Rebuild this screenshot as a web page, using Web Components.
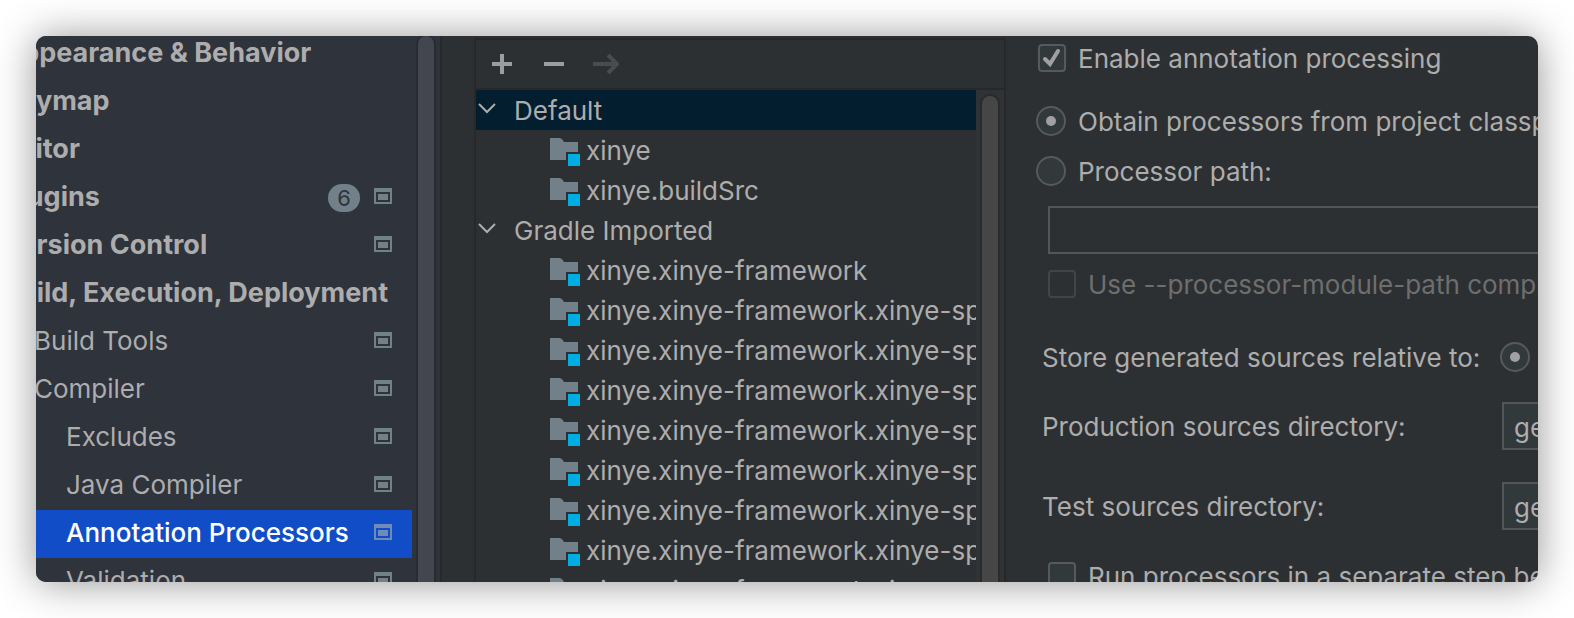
<!DOCTYPE html>
<html lang="en">
<head>
<meta charset="utf-8">
<title>Annotation Processors</title>
<style>
  html { background: #fff; }
  body { margin: 0; font-family: Inter, "Liberation Sans", sans-serif; font-size: 26px; line-height: 30px; color: #adadad; }
</style>
</head>
<body>
<settings-window>
  <settings-nav slot="nav">
    <nav-item strong>Appearance &amp; Behavior</nav-item>
    <nav-item strong>Keymap</nav-item>
    <nav-item strong>Editor</nav-item>
    <nav-item strong project badge="6">Plugins</nav-item>
    <nav-item strong project>Version Control</nav-item>
    <nav-item strong>Build, Execution, Deployment</nav-item>
    <nav-item level="1" project>Build Tools</nav-item>
    <nav-item level="1" project>Compiler</nav-item>
    <nav-item level="2" project>Excludes</nav-item>
    <nav-item level="2" project>Java Compiler</nav-item>
    <nav-item level="2" project selected>Annotation Processors</nav-item>
    <nav-item level="2" project>Validation</nav-item>
  </settings-nav>
  <profile-panel slot="profiles">
    <profile-group selected>Default</profile-group>
    <module-item>xinye</module-item>
    <module-item>xinye.buildSrc</module-item>
    <profile-group>Gradle Imported</profile-group>
    <module-item>xinye.xinye-framework</module-item>
    <module-item>xinye.xinye-framework.xinye-spring</module-item>
    <module-item>xinye.xinye-framework.xinye-spring</module-item>
    <module-item>xinye.xinye-framework.xinye-spring</module-item>
    <module-item>xinye.xinye-framework.xinye-spring</module-item>
    <module-item>xinye.xinye-framework.xinye-spring</module-item>
    <module-item>xinye.xinye-framework.xinye-spring</module-item>
    <module-item>xinye.xinye-framework.xinye-spring</module-item>
    <module-item>xinye.xinye-framework.xinye-spring</module-item>
  </profile-panel>
  <processor-form slot="form"></processor-form>
</settings-window>

<script>
const define = (name, html, setup) => {
  const template = document.createElement('template');
  template.innerHTML = '<style>*, *::before { box-sizing: border-box; }</style>' + html;
  customElements.define(name, class extends HTMLElement {
    constructor() {
      super();
      this.attachShadow({ mode: 'open' }).append(template.content.cloneNode(true));
    }
    connectedCallback() { if (setup) setup(this, this.shadowRoot); }
  });
};

define('settings-window', `
  <style>
    :host { display: block; height: 100vh; padding: 36px; box-sizing: border-box; }
    .window { display: flex; height: 100%; border-radius: 10px; overflow: hidden;
      background: #2d3032; box-shadow: 0 1px 40px rgba(0, 0, 0, .42); }
    ::slotted([slot=nav]) { flex: 0 0 406px; }
    ::slotted([slot=profiles]) { flex: 0 0 532px; margin: 2px 0 0 32px; }
    ::slotted([slot=form]) { flex: 1; min-width: 0; }
  </style>
  <main class="window">
    <slot name="nav"></slot><slot name="profiles"></slot><slot name="form"></slot>
  </main>`);

define('scroll-thumb', `
  <style>
    :host { display: block; box-sizing: border-box; width: 20px; border: 2px solid var(--edge);
      border-bottom: 0; border-radius: 10px 10px 0 0; background: var(--thumb); }
  </style>`);

define('settings-nav', `
  <style>
    :host { display: flex; overflow: hidden; box-sizing: border-box; background: #2f333c; border-right: 2px solid #292929; }
    nav { flex: 1; min-width: 0; margin-top: -6px; }
    scroll-thumb { margin: -2px 4px 0 4px; --edge: #282b32; --thumb: #43464e; }
  </style>
  <nav aria-label="Settings"><slot></slot></nav><scroll-thumb></scroll-thumb>`);

define('nav-item', `
  <style>
    :host { display: block; }
    a { display: flex; align-items: center; height: 48px; padding: 0 20px 4px 0; color: inherit; text-decoration: none; }
    .text { flex: 1; white-space: nowrap; margin-left: -34px; padding-top: 2px; }
    :host([level="1"]) .text { margin-left: -2px; }
    :host([level="2"]) .text { margin-left: 30px; }
    :host([strong]) .text { font-size: 27px; font-weight: 700; }
    :host([selected]) a { background: #114dc6; color: #fff; font-weight: 500; }
    .badge { width: 32px; height: 28px; margin: 4px 14px 0 0; border-radius: 14px; background: #728189;
      color: #2f333c; font-size: 22px; line-height: 28px; text-align: center; }
    svg { display: block; width: 18px; height: 16px; fill: #728189; }
    :host([selected]) svg { fill: #708bb5; }
    :host(:not([project])) svg, :host(:not([badge])) .badge { display: none; }
  </style>
  <a href="#"><span class="text"><slot></slot></span><span class="badge"></span>
    <svg viewBox="0 0 18 16" aria-hidden="true"><path fill-rule="evenodd" d="M0 0h18v16H0zM2 4v10h14V4z"/><path d="M4 6h10v6H4z"/></svg></a>`,
  (host, root) => { root.querySelector('.badge').textContent = host.getAttribute('badge') || ''; });

define('profile-panel', `
  <style>
    :host { display: flex; flex-direction: column; overflow: hidden; box-sizing: border-box;
      border: 2px solid #282828; border-bottom: 0; }
    .tools { display: flex; flex: 0 0 50px; border-bottom: 2px solid #282828; }
    button { display: grid; place-items: center; width: 52px; height: 48px; padding: 0; border: 0; background: none; }
    svg { width: 26px; height: 26px; fill: none; stroke: #9b9e9f; stroke-width: 4; }
    button:disabled svg { stroke: #4b4b4b; }
    .body { display: flex; flex: 1; min-height: 0; }
    .tree { flex: 1; min-width: 0; overflow: hidden; }
    .track { display: flex; width: 28px; padding: 4px 4px 0; background: #303335; }
    scroll-thumb { --edge: #292b2c; --thumb: #464647; }
  </style>
  <div class="tools">
    <button aria-label="Add profile"><svg viewBox="0 0 26 26"><path d="M13 3v20M3 13h20"/></svg></button>
    <button aria-label="Remove profile"><svg viewBox="0 0 26 26"><path d="M3 13h20"/></svg></button>
    <button aria-label="Move to" disabled><svg viewBox="0 0 26 26"><path d="M0 13h23M15 4l9 9-9 9"/></svg></button>
  </div>
  <div class="body"><div class="tree" role="tree"><slot></slot></div><div class="track"><scroll-thumb></scroll-thumb></div></div>`);

define('profile-group', `
  <style>
    :host { display: flex; align-items: center; box-sizing: border-box; height: 40px; gap: 16px; padding: 2px 0 0 2px; white-space: nowrap; }
    :host([selected]) { background: #021e2f; }
    svg { flex: none; width: 20px; height: 20px; margin-bottom: 2px; fill: none; stroke: #adadad; stroke-width: 2; }
  </style>
  <svg viewBox="0 0 20 20" aria-hidden="true"><path d="M1 4l8 8 8-8"/></svg><slot></slot>`,
  host => host.setAttribute('role', 'treeitem'));

define('module-item', `
  <style>
    :host { display: flex; align-items: center; box-sizing: border-box; height: 40px; gap: 6px; padding: 2px 0 0 74px; white-space: nowrap; }
    svg { flex: none; width: 30px; height: 28px; margin-top: 2px; }
  </style>
  <svg viewBox="0 0 30 28" aria-hidden="true"><path fill="#728189" d="M0 0h9q3 0 5 4h14v10H16v8H0z"/><path fill="#00ade0" d="M18 16h12v12H18z"/></svg><slot></slot>`,
  host => host.setAttribute('role', 'treeitem'));

define('processor-form', `
  <style>
    :host { display: block; overflow: hidden; }
    form { display: flex; flex-direction: column; padding: 7px 0 0 30px; white-space: nowrap; }
    label { padding-top: 2px; line-height: 28px; }
    .choice { display: flex; align-items: center; gap: 12px; }
    .cell { display: flex; flex: 0 0 30px; justify-content: flex-end; }
    .section { margin-top: 33px; }
    .next { margin-top: 20px; }
    .nested { margin: 15px 0 0 10px; }
    .off { color: #6e6e6e; }
    input { appearance: none; box-sizing: border-box; margin: 0; border: 2px solid #57595a; background: #32393a; }
    input[type=checkbox] { display: grid; place-items: center; width: 28px; height: 28px; border-radius: 4px; }
    input[type=checkbox]:checked { background: #32393a url("data:image/svg+xml,%3Csvg xmlns='http://www.w3.org/2000/svg' viewBox='0 0 24 24'%3E%3Cpath d='M5 13l5 5L18 5' fill='none' stroke='%23a0a0a0' stroke-width='4' stroke-linecap='round'/%3E%3C/svg%3E"); }
    input[type=checkbox]:disabled { border-color: #424546; background: none; }
    input[type=radio] { display: grid; place-items: center; width: 30px; height: 30px; border-radius: 50%; }
    input[type=radio]:checked::before { content: ""; width: 10px; height: 10px; border-radius: 50%; background: #a0a0a0; }
    input[type=text] { height: 48px; padding: 2px 10px 0; border-color: #555; color: inherit; font: inherit; }
    input[type=text]:disabled { background: none; }
    .path { margin: 20px -40px 0 12px; }
    .row { display: grid; grid-template-columns: 458px 400px; align-items: center; margin: 32px 0 0 6px; }
    .row input[type=text] { margin-left: 2px; }
    .store { margin-top: 43px; }
    .production { margin-top: 30px; }
    .last { margin-top: 31px; }
  </style>
  <form>
    <div class="choice"><span class="cell"><input type="checkbox" id="enable" checked></span><label for="enable">Enable annotation processing</label></div>
    <div class="choice section"><span class="cell"><input type="radio" name="source" id="classpath" checked></span><label for="classpath">Obtain processors from project classpath</label></div>
    <div class="choice next"><span class="cell"><input type="radio" name="source" id="path"></span><label for="path">Processor path:</label></div>
    <input class="path" type="text" aria-label="Processor path" disabled>
    <div class="choice nested off"><span class="cell"><input type="checkbox" id="module" disabled></span><label for="module">Use --processor-module-path compiler option</label></div>
    <div class="row store"><label for="relative">Store generated sources relative to:</label><input type="radio" name="relative" id="relative" checked></div>
    <div class="row production"><label for="production">Production sources directory:</label><input type="text" id="production" value="generated"></div>
    <div class="row"><label for="test">Test sources directory:</label><input type="text" id="test" value="generated_tests"></div>
    <div class="choice nested last"><span class="cell"><input type="checkbox" id="separate"></span><label for="separate">Run processors in a separate step before compiling</label></div>
  </form>`);
</script>
</body>
</html>
